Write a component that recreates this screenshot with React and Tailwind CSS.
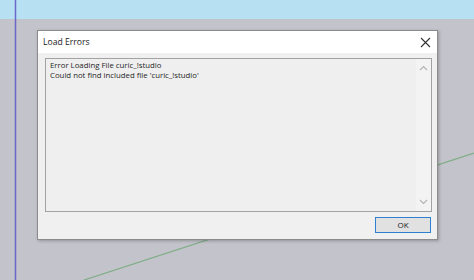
import React from 'react';

const font = { fontFamily: '"Open Sans", "Noto Sans", sans-serif' };

// Chevron used by the scrollbar arrows
const Chevron = ({ down = false }) => (
  <svg width="9" height="6" viewBox="0 0 9 6" className={down ? 'rotate-180' : ''}>
    <path d="M1 5 L4.5 1.5 L8 5" fill="none" stroke="#b4b4b4" strokeWidth="1.2" />
  </svg>
);

const CloseIcon = () => (
  <svg width="11" height="11" viewBox="0 0 11 11">
    <path d="M1 1 L10 10 M10 1 L1 10" stroke="#333" strokeWidth="1.1" />
  </svg>
);

// Canvas lines behind the dialog (the modelling viewport)
const Backdrop = () => (
  <svg className="absolute inset-0" width="474" height="280" viewBox="0 0 474 280">
    <line x1="15.5" y1="0" x2="15.5" y2="280" stroke="#6a68c8" strokeWidth="1.5" />
    <line x1="84" y1="280" x2="474" y2="153" stroke="#7fae86" strokeWidth="1.3" />
  </svg>
);

const LoadErrorsDialog = () => (
  <div className="ml-[37px] mt-[11px] w-[401px] h-[210px] flex flex-col border border-[#8c8c8c] bg-[#f0f0f0] shadow-[1px_1px_3px_rgba(0,0,0,0.25)]">
    <div className="h-[22px] shrink-0 bg-white flex items-center justify-between pl-[5px] pr-[6px]">
      <span className="text-[8.6px] text-[#1a1a1a]">Load Errors</span>
      <CloseIcon />
    </div>
    <div className="flex-1 flex flex-col pl-[7px] pr-[5px] pt-[5px] pb-[6px]">
      <div className="h-[154px] flex border border-[#a2a2a2] bg-[#efefef]">
        <div className="flex-1 pl-[4px] pt-[1px] text-[7.8px] leading-[10px] text-[#262626]">
          <p>Error Loading File curic_!studio</p>
          <p>Could not find included file 'curic_!studio'</p>
        </div>
        <div className="w-[15px] bg-[#f3f3f3] flex flex-col items-center justify-between py-[6px]">
          <Chevron />
          <Chevron down />
        </div>
      </div>
      <div className="flex justify-end mt-[5px] pr-[1px]">
        <button className="w-[56px] h-[16px] border-[1.5px] border-[#2f7fd0] bg-[#e1e1e1] text-[8px] leading-none text-[#1a1a1a] flex items-center justify-center">
          OK
        </button>
      </div>
    </div>
  </div>
);

export default function App() {
  return (
    <div className="relative w-[474px] h-[280px] overflow-hidden bg-[#c3c3cb]" style={font}>
      <Backdrop />
      <div className="relative">
        <div className="h-[19px] bg-[#b8e0f3]" />
        <LoadErrorsDialog />
      </div>
      <svg className="absolute left-0 top-0" width="20" height="19">
        <line x1="15.5" y1="0" x2="15.5" y2="19" stroke="#6a68c8" strokeWidth="1.5" />
      </svg>
    </div>
  );
}
